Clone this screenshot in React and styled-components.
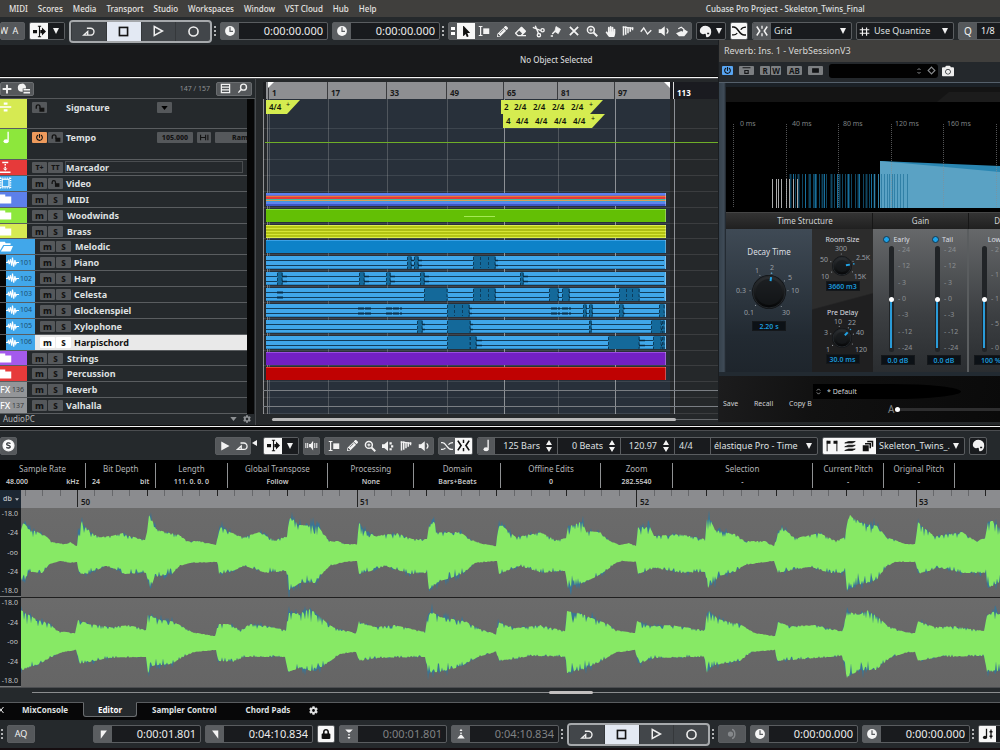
import React, { useState } from "react";
import styled, { createGlobalStyle, css } from "styled-components";
import {
  FaMousePointer,
  FaPencilAlt,
  FaEraser,
  FaHandPaper,
  FaLock,
  FaCog,
  FaCamera,
  FaPowerOff,
} from "react-icons/fa";

const GlobalStyle = createGlobalStyle`
  * {
    box-sizing: border-box;
  }
  body {
    margin: 0;
    background: #0b0b0c;
    color: #dfe0e1;
    font-family: "Noto Sans", "Open Sans", sans-serif;
    font-size: 9px;
    line-height: 12px;
    overflow-x: hidden;
  }
  button, input, select {
    font: inherit;
    color: inherit;
    margin: 0;
    padding: 0;
    border: 0;
    border-radius: 0;
    background: none;
    outline: none;
  }
`;

/* ---------- icons, all drawn on a 16 x 16 grid ---------- */

const Svg = ({ children, size = 12, ...rest }) => (
  <svg
    width={size}
    height={size}
    viewBox="0 0 16 16"
    fill="none"
    stroke="currentColor"
    strokeWidth="2"
    aria-hidden="true"
    {...rest}
  >
    {children}
  </svg>
);

const CycleIcon = (p) => (
  <Svg {...p}>
    <path d="M6 4h4.500a4 4 0 0 1 0 8.500H2l5-4.500v4" strokeWidth="1.700" />
  </Svg>
);
const StopIcon = (p) => (
  <Svg {...p}>
    <rect x="3" y="3" width="10" height="10" />
  </Svg>
);
const PlayIcon = (p) => (
  <Svg {...p}>
    <path d="M3 2l11 6-11 6z" />
  </Svg>
);
const RecordIcon = (p) => (
  <Svg {...p}>
    <circle cx="8" cy="8" r="5.600" />
  </Svg>
);
const ClockIcon = (p) => (
  <Svg {...p}>
    <circle cx="8" cy="8" r="6.600" fill="currentColor" stroke="none" />
    <path d="M8 3v5.400h4" stroke="#5b5e61" strokeWidth="1.600" />
  </Svg>
);
const ScrollIcon = (p) => (
  <Svg {...p}>
    <path d="M8 1v14M6 1.500h4M6 14.500h4" strokeWidth="1.400" />
    <path d="M0 6h5v4H0zM9 6h2V3l5 5-5 5v-3H9z" fill="currentColor" stroke="none" />
  </Svg>
);
const RangeIcon = (p) => (
  <Svg {...p}>
    <path d="M1 2h5M1 14h5M3.500 2v12" strokeWidth="1.600" />
    <rect x="7" y="4.500" width="8" height="7.500" fill="currentColor" stroke="none" />
  </Svg>
);
const ScissorsIcon = (p) => (
  <Svg {...p} strokeWidth="1.700">
    <circle cx="13" cy="6.500" r="2" />
    <circle cx="8.500" cy="12.500" r="2" />
    <path d="M11 7L1 3M8 10.500L4 1" />
  </Svg>
);
const GlueIcon = (p) => (
  <Svg {...p}>
    <path d="M8 2l6 3.500-3 6-4.500-2.800z" fill="currentColor" stroke="currentColor" strokeWidth="1" />
    <path d="M7 8l-4 4M1 14.500h3" strokeWidth="2" />
  </Svg>
);
const CrossIcon = (p) => (
  <Svg {...p}>
    <path d="M2.500 2.500l11 11M13.500 2.500l-11 11" strokeWidth="2.400" />
  </Svg>
);
const ZoomIcon = (p) => (
  <Svg {...p}>
    <circle cx="6.500" cy="6.500" r="4.600" />
    <path d="M10 10l5 5" strokeWidth="2.600" />
    <path d="M6.500 4.500v4M4.500 6.500h4" strokeWidth="1.400" />
  </Svg>
);
const WarpIcon = (p) => (
  <Svg {...p}>
    <path d="M2 2v12M5 2v11M8 3v8M11 3v6M14 3v4" strokeWidth="2" />
    <path d="M1 2.500l14 2" strokeWidth="1.500" />
  </Svg>
);
const LineIcon = (p) => (
  <Svg {...p}>
    <path d="M1 9l4-5 5 8 5-5" strokeWidth="1.800" />
  </Svg>
);
const SpeakerIcon = (p) => (
  <Svg {...p}>
    <path d="M1 5.500h3l5-4v13l-5-4H1z" fill="currentColor" stroke="none" />
    <path d="M11.500 4.500c2 2 2 5 0 7" strokeWidth="1.700" />
  </Svg>
);
const MonitorIcon = (p) => (
  <Svg {...p}>
    <path d="M5 6h2l3-4v12l-3-4H5z" fill="currentColor" stroke="none" />
    <path d="M1 5v6M3.300 5v6M12 5v6M14.500 5v6" strokeWidth="1.300" />
  </Svg>
);
const ScrubIcon = (p) => (
  <Svg {...p}>
    <path d="M0 5.500h3l5-4v13l-5-4H0z" fill="currentColor" stroke="none" />
    <path d="M10 3h3v3h-3zM12 7h3v3h-3zM10 11h3v2.500h-3z" fill="currentColor" stroke="none" />
  </Svg>
);
const PaintIcon = (p) => (
  <Svg {...p}>
    <path d="M0 11l7-3 2 1 1-4 6 4-5 6H4z" fill="currentColor" stroke="none" />
    <path d="M3 5l4-2 4 3" strokeWidth="1.500" />
  </Svg>
);
const HeadIcon = (p) => (
  <Svg {...p}>
    <path
      d="M8 1a7 6.500 0 0 1 7 7c0 4-2 7-5 7-2 0-1-3-2-4s-2 1-4 0-3-2-3-4a7 6 0 0 1 7-6z"
      fill="currentColor"
      stroke="none"
    />
    <path d="M10 10.500h2.500" stroke="#1c1e21" strokeWidth="1.800" />
  </Svg>
);
const FadeIcon = (p) => (
  <Svg {...p}>
    <path d="M0 3.500h2c5 0 6 9 12 9h2" strokeWidth="1.700" />
    <path d="M0 12.500h2c2 0 3-1 4-2M10 6.500c1-2 3-3 6-3" strokeWidth="1.400" />
  </Svg>
);
const SnapIcon = (p) => (
  <Svg {...p}>
    <path d="M8 1v4M8 11v4" strokeWidth="1.800" />
    <path d="M1 2l4 6-4 6M15 2l-4 6 4 6" strokeWidth="2" />
  </Svg>
);
const HashIcon = (p) => (
  <Svg {...p}>
    <path d="M5 2v12M11 2v12M1 5.500h14M1 10.500h14" strokeWidth="1.700" />
  </Svg>
);
const NoteIcon = (p) => (
  <Svg {...p}>
    <path d="M10 1v11" strokeWidth="1.700" />
    <ellipse cx="7.500" cy="12.500" rx="3.200" ry="2.500" fill="currentColor" stroke="none" />
  </Svg>
);
const FolderIcon = (p) => (
  <Svg {...p}>
    <path d="M0 2h7v2.500h8V14H0z" fill="currentColor" stroke="none" />
  </Svg>
);
const OpenFolderIcon = (p) => (
  <Svg {...p}>
    <path d="M0 2h6l1 2h6v2H4L0 13z" fill="currentColor" stroke="none" />
    <path d="M5 7.500h11L13 14H1z" fill="currentColor" stroke="none" />
  </Svg>
);
const WaveIcon = (p) => (
  <Svg {...p}>
    <path d="M0 8h2l1-2 1 4 1.500-6L7 12 8 2l1.500 11L11 5l1 5 1-2h3" strokeWidth="1.400" />
  </Svg>
);
const UnlockIcon = (p) => (
  <Svg {...p}>
    <path d="M2 9V6a3 3 0 0 1 6 0v3" strokeWidth="2.200" />
    <rect x="7" y="7.500" width="8" height="6.500" fill="currentColor" stroke="none" />
  </Svg>
);
const ListIcon = (p) => (
  <Svg {...p}>
    <path d="M2 2h12v12H2zM2 6h12M2 10h12" strokeWidth="1.800" />
  </Svg>
);
const SearchIcon = (p) => (
  <Svg {...p}>
    <circle cx="9.500" cy="6" r="4.300" />
    <path d="M6 9.500L2 14" />
  </Svg>
);
const LayersIcon = (p) => (
  <Svg {...p}>
    <path d="M1 4l5-2h9l-4 2zM1 9l5-2h9l-4 2zM1 14l5-2h9l-4 2z" fill="currentColor" strokeWidth="1" />
  </Svg>
);
const StackIcon = (p) => (
  <Svg {...p}>
    <path d="M7 1h8v8h-2V3H7zM4 4h8v7h-2V6H4z" fill="currentColor" stroke="none" />
    <path d="M1 7h8v8H1z" fill="currentColor" stroke="none" />
  </Svg>
);
const MarksIcon = (p) => (
  <Svg {...p}>
    <path d="M1.500 15V1M14.500 15V1" strokeWidth="1.300" />
    <path d="M1 1h5v4H1zM10 1h5v4h-5z" fill="currentColor" stroke="none" />
  </Svg>
);
const LeftMark = (p) => (
  <Svg {...p}>
    <path d="M4 14V2h9z" fill="currentColor" stroke="none" />
  </Svg>
);
const RightMark = (p) => (
  <Svg {...p}>
    <path d="M12 14V2H3z" fill="currentColor" stroke="none" />
  </Svg>
);
const PunchIn = (p) => (
  <Svg {...p}>
    <path d="M3 2h10l-4 4H7zM7 8h2v2H7zM8 15l-2-3h4z" fill="currentColor" stroke="none" />
  </Svg>
);
const PunchOut = (p) => (
  <Svg {...p}>
    <path d="M3 14h10L9 9H7zM7 6h2v2H7zM8 1l2 3H6z" fill="currentColor" stroke="none" />
  </Svg>
);
const DivideIcon = (p) => (
  <Svg {...p}>
    <path d="M0 8h15" />
    <path d="M5 2h5v3H5zM5 11h5v3H5z" fill="currentColor" stroke="none" />
  </Svg>
);
const MarkerIcon = (p) => (
  <Svg {...p}>
    <path d="M0 15h14M3 2h8" />
    <path d="M7 4v6" strokeDasharray="2 1.500" />
    <path d="M4 10h6l-3 3z" fill="currentColor" stroke="none" />
  </Svg>
);
const FilmIcon = (p) => (
  <Svg {...p}>
    <rect x="3" y="3" width="9" height="10" strokeWidth="1.500" />
    <path d="M1 1v14M14 1v14" strokeDasharray="1.500 1.500" />
    <path d="M0 1.500h15M0 14.500h15" strokeWidth="1.500" strokeDasharray="1.500 1.500" />
  </Svg>
);

/* ---------- shared pieces ---------- */

const Page = styled.div`
  position: relative;
  display: flex;
  flex-direction: column;
  overflow: hidden;
`;

const MenuBar = styled.nav`
  display: flex;
  align-items: center;
  height: 17px;
  padding-left: 9px;
  gap: 10px;
  background: #403f3d;
  font-size: 8px;
  font-weight: 500;
  a {
    color: #e6e4e2;
    text-decoration: none;
  }
`;

const WindowTitle = styled.h1`
  flex: 1;
  margin: 0 0 0 184px;
  text-align: center;
  font-size: 8px;
  font-weight: 500;
`;

const Toolbar = styled.div`
  display: flex;
  align-items: center;
  height: ${(p) => p.$height || 28}px;
  padding-left: ${(p) => p.$indent || 0}px;
  gap: 4px;
  background: #25292c;
  white-space: nowrap;
  > * {
    flex-shrink: 0;
  }
`;

const Group = styled.div`
  display: flex;
  align-items: stretch;
  height: 18px;
  overflow: hidden;
  border: 1px solid #5a5d60;
  border-radius: 2px;
  background: ${(p) => (p.$dark ? "#191b1e" : "#55585b")};
`;

const Tool = styled.button`
  display: flex;
  align-items: center;
  justify-content: center;
  width: ${(p) => p.$w || 18}px;
  color: #f2f2f2;
  font-size: ${(p) => p.$size || 11}px;
  ${(p) =>
    p.$grey &&
    css`
      background: #55585b;
    `}
  ${(p) =>
    p.$on &&
    css`
      background: #f7f7f7;
      color: #111;
    `}
  ${(p) =>
    p.$dark &&
    css`
      background: #191b1e;
    `}
`;

const Dots = styled.span`
  width: 4px;
  height: 11px;
  margin: 0 -2px;
  background: repeating-linear-gradient(#b0b2b4 0 2px, transparent 2px 4px);
  background-clip: content-box;
  padding-right: 2px;
`;

const TransportBox = styled.div`
  display: flex;
  width: 143px;
  height: 23px;
  overflow: hidden;
  border: 2px solid #a6a9ac;
  border-radius: 4px;
  background: #42464a;
`;

const TransportButton = styled.button`
  flex: 1;
  display: flex;
  align-items: center;
  justify-content: center;
  color: #eee;
  border-left: 1px solid #35383b;
  ${(p) =>
    p.$on &&
    css`
      background: #e3e9f3;
      color: #151515;
    `}
`;

const TimeBox = styled.label`
  display: flex;
  width: 108px;
  height: 18px;
  border: 1px solid #5a5d60;
  border-radius: 2px;
  background: #191b1e;
  span {
    display: flex;
    align-items: center;
    justify-content: center;
    width: 18px;
    background: #5b5e61;
    color: #f5f5f5;
  }
  input {
    flex: 1;
    min-width: 0;
    padding-right: 4px;
    text-align: right;
    font-size: 11px;
    color: ${(p) => (p.$dim ? "#808284" : "#ececec")};
  }
`;

const Picker = styled.div`
  position: relative;
  display: flex;
  width: ${(p) => p.$w}px;
  border-left: ${(p) => (p.$line ? "1px solid #5a5d60" : "0")};
  select {
    width: 100%;
    appearance: none;
    padding: 0 12px 0 3px;
  }
  &::after {
    content: "";
    position: absolute;
    right: 5px;
    top: 5px;
    border: 3px solid transparent;
    border-top: 6px solid #f2f2f2;
    border-bottom: 0;
    pointer-events: none;
  }
`;

const Caret = styled.i`
  border: 3px solid transparent;
  border-top: 6px solid #f2f2f2;
  border-bottom: 0;
`;

const Stepper = styled.label`
  display: flex;
  align-items: center;
  width: ${(p) => p.$w}px;
  border-left: 1px solid #5a5d60;
  input {
    flex: 1;
    min-width: 0;
    text-align: ${(p) => (p.$plain ? "left" : "right")};
    padding: 0 6px 0 4px;
  }
  svg {
    margin-right: 5px;
  }
`;

const Arrows = () => (
  <svg width="6" height="12" viewBox="0 0 6 12" fill="#f2f2f2" aria-hidden="true">
    <path d="M3 0l3 5H0zM3 12l3-5H0z" />
  </svg>
);

const Select = ({ label, value, ...rest }) => (
  <Picker {...rest}>
    <select aria-label={label} defaultValue={value}>
      <option>{value}</option>
    </select>
  </Picker>
);

const Time = ({ icon, label, value, dim }) => (
  <TimeBox $dim={dim}>
    <span>{icon}</span>
    <input aria-label={label} defaultValue={value} />
  </TimeBox>
);

function Transport() {
  const [mode, setMode] = useState("Stop");
  const buttons = [
    ["Cycle", <CycleIcon size={13} />],
    ["Stop", <StopIcon size={13} />],
    ["Play", <PlayIcon size={12} />],
    ["Record", <RecordIcon size={13} />],
  ];
  return (
    <TransportBox>
      {buttons.map(([name, icon]) => (
        <TransportButton key={name} aria-label={name} $on={mode === name} onClick={() => setMode(name)}>
          {icon}
        </TransportButton>
      ))}
    </TransportBox>
  );
}

/* ---------- top of the project window ---------- */

const menus = ["MIDI", "Scores", "Media", "Transport", "Studio", "Workspaces", "Window", "VST Cloud", "Hub", "Help"];

const InfoStrip = styled.div`
  height: 31px;
  padding: 9px 0 0 520px;
  background: #18191b;
  font-size: 8px;
  font-weight: 500;
  color: #d2d3d4;
`;

const Divider = styled.div`
  height: ${(p) => (p.$thick ? 6 : 3)}px;
  border-top: 1px solid #0a0a0a;
  border-bottom: 1px solid #4b4d50;
  background: linear-gradient(#f4f4f4 0 1px, #080808 1px);
`;

const projectTools = [
  ["Range", <RangeIcon />],
  ["Draw", <FaPencilAlt />],
  ["Erase", <FaEraser />],
  ["Split", <ScissorsIcon size={13} />],
  ["Glue", <GlueIcon />],
  ["Mute", <CrossIcon />],
  ["Zoom", <ZoomIcon />],
  ["Comp", <FaHandPaper />],
  ["Time Warp", <WarpIcon />],
  ["Line", <LineIcon />],
  ["Play", <SpeakerIcon />],
  ["Color", <PaintIcon />],
];

const LeftText = styled.span`
  flex: 1;
  padding-left: 4px;
  text-align: left;
`;

const ProjectToolbar = () => (
  <Toolbar>
    <Group>
      <Tool $w={6} $size={9}>W</Tool>
      <Tool $w={17} $size={9}>A</Tool>
    </Group>
    <Group $dark>
      <Tool $on aria-label="Auto-Scroll"><ScrollIcon size={13} /></Tool>
      <Tool $w={16} $dark aria-label="Auto-Scroll settings"><Caret /></Tool>
    </Group>
    <Transport />
    <Dots />
    <Time icon={<ClockIcon />} label="Primary time" value="0:00:00.000" />
    <Time icon={<ClockIcon />} label="Secondary time" value="0:00:00.000" />
    <Dots />
    <Group>
      <Tool $w={8} aria-label="Tool menu">
        <svg width="4" height="8" viewBox="0 0 4 8" fill="#fff"><path d="M0 0h4v3H0zM0 5h4v3H0z" /></svg>
      </Tool>
      <Tool $on aria-label="Object Selection"><FaMousePointer /></Tool>
      {projectTools.map(([name, icon]) => (
        <Tool key={name} aria-label={name}>{icon}</Tool>
      ))}
    </Group>
    <Group $dark>
      <Tool $w={16} aria-label="Colors"><HeadIcon size={13} /></Tool>
      <Tool $w={12} aria-label="Color list"><Caret /></Tool>
    </Group>
    <Group>
      <Tool $w={16} $on aria-label="Snap"><FadeIcon size={14} /></Tool>
    </Group>
    <Group $dark>
      <Tool $w={17} $grey aria-label="Snap type"><SnapIcon /></Tool>
      <Select $w={81} $line label="Grid type" value="Grid" />
    </Group>
    <Group $dark>
      <Tool $w={14} aria-label="Quantize grid"><HashIcon size={11} /></Tool>
      <Select $w={82} label="Grid resolution" value="Use Quantize" />
    </Group>
    <Group>
      <Tool $w={18} $size={10} aria-label="Quantize">Q</Tool>
      <Tool $w={60} $dark $size={9}>
        <LeftText>1/8</LeftText>
      </Tool>
    </Group>
  </Toolbar>
);

/* ---------- track list ---------- */

const Workspace = styled.main`
  display: flex;
  height: 346px;
  background: #25292c;
`;

const TrackPanel = styled.section`
  display: flex;
  flex-direction: column;
  width: 256px;
  border-right: 1px solid #45484b;
`;

const TrackHeader = styled.header`
  display: flex;
  align-items: center;
  height: 20px;
  padding: 0 3px 0 0;
  border-bottom: 1px solid #55585b;
  color: #8e9194;
  font-size: 7px;
  p {
    flex: 1;
    margin: 0;
    padding-right: 6px;
    text-align: right;
  }
`;

const HeaderButtons = styled.div`
  display: flex;
  height: 14px;
  border: 1px solid #6a6d70;
  border-radius: 2px;
  background: #55585b;
`;

const TrackList = styled.ul`
  display: grid;
  grid-template-rows: 30px 31px 254px;
  margin: 0 8px 0 0;
  padding: 0;
  list-style: none;
  box-shadow: 7px 0 0 #060606;
`;

const EvenRows = styled.ul`
  display: grid;
  grid-template-rows: repeat(16, 1fr);
  height: 100%;
  margin: 0;
  padding: 0;
  list-style: none;
`;

const Track = styled.li`
  display: flex;
  align-items: flex-start;
  min-height: 0;
  overflow: hidden;
  border-bottom: 1px solid #5a5d60;
  padding-left: ${(p) => (p.$child ? 6 : 0)}px;
  background: ${(p) => (p.$child ? "linear-gradient(90deg, #060606 6px, #25292c 6px)" : "#25292c")};
  ${(p) =>
    p.$selected &&
    css`
      background: linear-gradient(90deg, #060606 6px, #e9e9e9 6px);
      color: #111;
    `}
`;

const TrackColor = styled.div`
  display: flex;
  align-items: ${(p) => (p.$tall ? "flex-start" : "center")};
  align-self: stretch;
  flex-shrink: 0;
  width: ${(p) => p.$w}px;
  padding-top: ${(p) => (p.$tall ? 2 : 0)}px;
  background: ${(p) => p.$color};
  color: #fff;
  svg {
    flex-shrink: 0;
  }
  small {
    margin-left: 1px;
    font-size: 7px;
    color: ${(p) => (p.$fx ? "#3a3c3e" : "#1d4d6e")};
  }
  b {
    flex-shrink: 0;
    width: 11px;
    font-size: 9px;
    font-weight: 500;
  }
`;

const TrackButtons = styled.div`
  display: flex;
  gap: 1px;
  flex-shrink: 0;
  width: ${(p) => p.$w || 34}px;
  margin: ${(p) => (p.$tall ? 3 : 2)}px 0 0 5px;
`;

const MiniButton = styled.button`
  display: flex;
  align-items: center;
  justify-content: center;
  width: ${(p) => p.$w || 15}px;
  height: 11px;
  overflow: hidden;
  border-radius: 1px;
  background: ${(p) => p.$bg || "#55585b"};
  color: #131313;
  font-size: ${(p) => p.$size || 8}px;
  font-weight: 800;
  line-height: 11px;
`;

const TrackName = styled.span`
  font-size: 9px;
  font-weight: 700;
  line-height: ${(p) => (p.$tall ? 18 : 15)}px;
  width: ${(p) => p.$w || "auto"};
  ${(p) =>
    p.$boxed &&
    css`
      flex: 1;
      height: 12px;
      margin: 1px 4px 0 -1px;
      border: 1px solid #4a4d50;
      line-height: 11px;
    `}
`;

const Extras = styled.div`
  display: flex;
  gap: 4px;
  flex: 1;
  overflow: hidden;
  margin-top: 3px;
  > * {
    flex-shrink: 0;
  }
`;

const PanelFooter = styled.footer`
  display: flex;
  align-items: center;
  gap: 6px;
  height: 10px;
  padding: 0 4px 0 3px;
  color: #8e9194;
  font-size: 8px;
  line-height: 8px;
  span {
    flex: 1;
    color: #b4b6b8;
  }
`;

const tracks = [
  { name: "Marcador", color: "#e63a3a", icon: "marker" },
  { name: "Video", color: "#41a7ea", icon: "film" },
  { name: "MIDI", color: "#5d80ea", icon: "folder", clip: "midi" },
  { name: "Woodwinds", color: "#8de73c", icon: "folder", clip: "wood" },
  { name: "Brass", color: "#d6ea52", icon: "folder", clip: "brass" },
  { name: "Melodic", color: "#41a7ea", icon: "open", clip: "melodic" },
  { name: "Piano", number: 101, blocks: [[141, 4, 3], [148, 4, 4], [207, 22, 3]] },
  { name: "Harp", number: 102, blocks: [[11, 5, 5], [93, 5, 5], [120, 4, 5], [154, 4, 5], [254, 3, 5]] },
  { name: "Celesta", number: 103, blocks: [[158, 23, 0], [207, 22, 1], [283, 9, 1], [296, 7, 1], [353, 20, 0]], thin: [[11, 6]] },
  { name: "Glockenspiel", number: 104, blocks: [[181, 22, 3], [317, 3, 1], [323, 3, 1], [353, 4, 2], [393, 5, 0]], thin: [[92, 14], [120, 16], [285, 9], [296, 9]] },
  { name: "Xylophone", number: 105, blocks: [[151, 5, 3], [181, 23, 3], [323, 2, 1], [385, 10, 1], [396, 2, 0]] },
  { name: "Harpischord", number: 106, selected: true, blocks: [[181, 23, 0], [204, 6, 6], [342, 31, 6], [387, 8, 1], [396, 2, 0]] },
  { name: "Strings", color: "#a45aec", icon: "folder", clip: "strings" },
  { name: "Percussion", color: "#e63a3a", icon: "folder", clip: "percussion" },
  { name: "Reverb", color: "#939598", fx: 136 },
  { name: "Valhalla", color: "#939598", fx: 137 },
];

const trackIcons = {
  marker: <MarkerIcon size={12} />,
  film: <FilmIcon size={12} />,
  folder: <FolderIcon size={12} />,
  open: <OpenFolderIcon size={13} />,
};

function TrackRow({ track }) {
  const child = !!track.number;
  const deep = child || track.icon === "open";
  const marker = track.icon === "marker";
  const bg = track.selected ? "#fff" : undefined;
  return (
    <Track $child={child} $selected={track.selected}>
      <TrackColor $color={track.color || "#41a7ea"} $fx={track.fx} $w={child ? 29 : deep ? 35 : 27}>
        {track.icon && trackIcons[track.icon]}
        {child && <WaveIcon size={13} />}
        {track.fx && <b>FX</b>}
        {(track.number || track.fx) && <small>{track.number || track.fx}</small>}
      </TrackColor>
      <TrackButtons $w={track.clip ? 35 : 34}>
        <MiniButton $bg={bg} $size={marker ? 7 : 9} aria-label="Mute">
          {marker ? "T+" : "m"}
        </MiniButton>
        <MiniButton $bg={bg} $size={marker ? 7 : 8} aria-label="Solo">
          {marker ? "TT" : track.icon === "film" ? <UnlockIcon size={9} /> : "S"}
        </MiniButton>
      </TrackButtons>
      <TrackName $boxed={marker}>{track.name}</TrackName>
    </Track>
  );
}

const Tracks = () => (
  <TrackPanel>
    <TrackHeader>
      <HeaderButtons>
        <Tool $w={12} aria-label="Add track">
          <Svg size={10}><path d="M8 1v14M1 8h14" strokeWidth="3" /></Svg>
        </Tool>
        <Tool $w={20} aria-label="Track presets">
          <Svg size={13}>
            <path d="M6 2a5 5 0 1 0 0 10h1V8h4a5 5 0 0 0-5-6z" fill="currentColor" stroke="none" />
            <path d="M8 9.500h8M8 13h8" strokeWidth="2" />
          </Svg>
        </Tool>
      </HeaderButtons>
      <p>147 / 157</p>
      <HeaderButtons>
        <Tool $w={17} aria-label="Divide list"><ListIcon size={11} /></Tool>
        <Tool $w={17} aria-label="Find tracks"><SearchIcon size={11} /></Tool>
      </HeaderButtons>
    </TrackHeader>
    <TrackList>
      <Track>
        <TrackColor $tall $w={27} $color="#d6ea52"><DivideIcon size={12} /></TrackColor>
        <TrackButtons $tall><MiniButton aria-label="Lock"><UnlockIcon size={10} /></MiniButton></TrackButtons>
        <TrackName $tall $w="91px">Signature</TrackName>
        <Extras>
          <MiniButton aria-label="Signature options">
            <svg width="7" height="4" viewBox="0 0 8 5"><path d="M0 0h8L4 5z" /></svg>
          </MiniButton>
        </Extras>
      </Track>
      <Track>
        <TrackColor $tall $w={27} $color="#8de73c"><NoteIcon size={13} /></TrackColor>
        <TrackButtons $tall>
          <MiniButton $bg="#ee9a5c" aria-label="Activate tempo"><FaPowerOff size={7} /></MiniButton>
          <MiniButton aria-label="Lock"><UnlockIcon size={10} /></MiniButton>
        </TrackButtons>
        <TrackName $tall $w="91px">Tempo</TrackName>
        <Extras>
          <MiniButton $w={36} $size={7}>105.000</MiniButton>
          <MiniButton $w={14} aria-label="Time base">
            <Svg size={9}><path d="M1 3v10M1 8h9M10 3v10M14 3v10" /></Svg>
          </MiniButton>
          <MiniButton $w={50} $size={7}>Ram</MiniButton>
        </Extras>
      </Track>
      <li>
        <EvenRows>
          {tracks.map((t) => (
            <TrackRow key={t.name} track={t} />
          ))}
        </EvenRows>
      </li>
    </TrackList>
    <PanelFooter>
      <span>AudioPC</span>
      <svg width="7" height="4" viewBox="0 0 8 5" fill="currentColor"><path d="M0 0h8L4 5z" /></svg>
      <FaCog size={8} />
    </PanelFooter>
  </TrackPanel>
);

/* ---------- arrangement ---------- */

const Timeline = styled.section`
  position: relative;
  flex: 1;
  min-width: 0;
  padding: 3px 0 0 7px;
  background: #25282a;
`;

const Bars = styled.div`
  position: relative;
  display: flex;
  height: 17px;
  padding-left: 5px;
  background: linear-gradient(90deg, #1d1e21 3px, #8e8f92 3px 407px, #1a1b20 407px);
  &::before,
  &::after {
    content: "";
    position: absolute;
    top: 0;
    left: 5px;
    border-top: 6px solid #fff;
    border-right: 6px solid transparent;
  }
  &::after {
    left: 401px;
    border-right: 0;
    border-left: 6px solid transparent;
  }
`;

const Bar = styled.span`
  flex: 0 0 ${(p) => p.$w}px;
  padding: 5px 0 0 3px;
  border-left: 1px solid ${(p) => (p.$past ? "#ddd" : "#3a3b3e")};
  color: ${(p) => (p.$past ? "#fff" : "#1a1a1a")};
  font-size: 8px;
  font-weight: 700;
`;

const Lanes = styled.div`
  position: relative;
  display: grid;
  grid-template-rows: 30px 31px 254px;
  background: linear-gradient(90deg, #26292c 3px, #28303a 3px 407px, #25282a 407px);
`;

const GridLines = styled.div`
  position: absolute;
  inset: 0;
  display: flex;
  padding-left: 5px;
  border-left: 1px solid #8f9092;
  box-shadow: inset 3px 0 0 #26292c, inset 4px 0 0 #77797b;
`;

const GridLine = styled.i`
  flex: 0 0 ${(p) => p.$w}px;
  border-left: 1px solid ${(p) => (p.$bright ? "#8c9095" : "#50565d")};
`;

const Lane = styled.div`
  position: relative;
  min-height: 0;
  padding: 1px 0 2px 3px;
  border-bottom: 1px solid rgba(255, 255, 255, 0.1);
`;

const FxLine = styled.div`
  height: 1px;
  margin: 7px 0 0 -3px;
  background: #7a7e83;
`;

const flatClips = {
  midi: "linear-gradient(#5b80f0 0 2px, #7d6ab0 2px 3px, #ef7433 3px 4px, #e63a3c 4px 6px, #42b6a0 6px 7px, #d8a055 7px 8px, #3f9bdc 8px 9px, #5f83ee 9px 11px, #3b56c4 11px)",
  wood: "linear-gradient(#a5ea55, #a5ea55) 198px 7px / 31px 1px no-repeat, linear-gradient(#86e033 0 1px, #63bf05 1px)",
  brass: "linear-gradient(#dcf04a 0 1px, #b3c414 1px 3px, #d6e636 3px 4px, #aebf16 4px 6px, #d6e636 6px 7px, #b3c414 7px 9px, #d6e636 9px 10px, #b3c414 10px 12px, #dcf04a 12px)",
  melodic: "linear-gradient(#3aa1e6 0 1px, #0d82c8 1px)",
  strings: "linear-gradient(#9a4ce2 0 1px, #7220c4 1px)",
  percussion: "linear-gradient(#ee3a30 0 1px, #bf0202 1px)",
};

const Clip = styled.div`
  width: 400px;
  height: 13px;
  background: ${(p) => flatClips[p.$kind] || "#40a7ea"};
  border-right: 1px solid rgba(255, 255, 255, 0.3);
  svg {
    display: block;
  }
`;

const Signatures = styled.div`
  position: absolute;
  left: ${(p) => p.$x}px;
  top: ${(p) => p.$y}px;
  display: flex;
  width: ${(p) => p.$w}px;
  height: 14px;
  padding-left: 2px;
  background: #d5ec50;
  clip-path: polygon(0 0, 100% 0, calc(100% - 13px) 100%, 0 100%);
  color: #10150a;
  font-size: 8px;
  font-weight: 600;
  line-height: 14px;
  span {
    width: 19px;
    padding-left: 1px;
  }
  span:first-child {
    width: ${(p) => p.$first || 18}px;
  }
  sup {
    font-size: 7px;
    font-weight: 400;
    line-height: 10px;
  }
`;

const TempoLine = styled.div`
  position: absolute;
  left: 2px;
  right: 0;
  top: 13px;
  height: 1px;
  background: #6fae28;
`;

const ScrollTrack = styled.div`
  height: 3px;
  margin: 4px 0 0 9px;
  background: linear-gradient(#25282a 1px, #66696c 1px 2px, #25282a 2px);
  div {
    width: 404px;
    height: 3px;
    border-radius: 2px;
    background: #b9b9b9;
  }
`;

const bars = [[1, 59], [17, 59], [33, 60], [49, 57], [65, 54], [81, 57], [97, 59], [113, 45]];

function AudioClip({ blocks = [], thin = [] }) {
  return (
    <Clip>
      <svg width="399" height="13" viewBox="0 0 399 13">
        <path d="M0 12.500H399" stroke="#2b86c2" />
        <path d="M0 4.500H398M0 9.500H398" stroke="#123e5c" />
        {thin.map(([x, w]) => (
          <g key={x} stroke="#0a2e47" strokeWidth="2" strokeDasharray="6 1">
            <path d={`M${x} 4.500h${w}M${x} 9.500h${w}`} />
          </g>
        ))}
        {blocks.map(([x, w, tail]) => (
          <g key={x}>
            <path
              d={`M${x} 1l1-1h${w - 1}l1 1v4l-1 1.500 1 1.500v4l-1 1h-${w - 1}l-1-1V8l1-1.500-1-1.500z`}
              fill="#14699a"
            />
            <path
              d={`M${x + 0.5} 1v12M${x + w} 1v12${w > 15 && w < 23 ? `M${x + Math.round(w / 3) + 0.5} 1v11M${x + Math.round((w * 2) / 3) + 0.5} 1v11` : ""}`}
              stroke="#0c3c5c"
              strokeDasharray="3 2"
            />
            {tail > 0 && (
              <path d={`M${x + w} 4.500h${tail}M${x + w} 9.500h${tail}`} stroke="#0a2a40" strokeWidth="1.500" />
            )}
          </g>
        ))}
      </svg>
    </Clip>
  );
}

const Arrangement = () => (
  <Timeline>
    <Bars>
      {bars.map(([n, w]) => (
        <Bar key={n} $w={w} $past={n === 113}>{n}</Bar>
      ))}
    </Bars>
    <Lanes>
      <GridLines>
        {bars.map(([n, w]) => (
          <GridLine key={n} $w={w} $bright={n === 65 || n > 96} />
        ))}
      </GridLines>
      <Lane>
        <Signatures $x={3} $y={1} $w={34}><span>4/4</span><sup>+</sup></Signatures>
        <Signatures $x={238} $y={1} $w={102} $first={10}>
          <span>2</span><span>2/4</span><span>2/4</span><span>2/4</span><span>2/4</span><sup>+</sup>
        </Signatures>
        <Signatures $x={240} $y={15} $w={102} $first={10}>
          <span>4</span><span>4/4</span><span>4/4</span><span>4/4</span><span>4/4</span><sup>+</sup>
        </Signatures>
      </Lane>
      <Lane><TempoLine /></Lane>
      <EvenRows as="div">
        {tracks.map((t) => (
          <Lane key={t.name}>
            {t.clip && <Clip $kind={t.clip} />}
            {t.blocks && <AudioClip blocks={t.blocks} thin={t.thin} />}
            {t.fx && <FxLine />}
          </Lane>
        ))}
      </EvenRows>
    </Lanes>
    <ScrollTrack><div /></ScrollTrack>
  </Timeline>
);

/* ---------- reverb plug-in window ---------- */

const Plugin = styled.section`
  position: absolute;
  left: 718px;
  right: 0;
  top: 40px;
  height: 382px;
  overflow: hidden;
  border-left: 1px solid #1a1d20;
  background: #0d0d0e;
  color: #cfd2d4;
  font-size: 7px;
`;

const PluginTitle = styled.h2`
  height: 22px;
  margin: 0;
  padding: 0 5px;
  background: #403f3d;
  font-size: 9px;
  font-weight: 400;
  line-height: 22px;
  color: #d8d7d5;
`;

const PluginBar = styled.div`
  display: flex;
  align-items: center;
  gap: 6px;
  height: 20px;
  padding: 0 0 3px 3px;
  background: #24282c;
`;

const ButtonPair = styled.div`
  display: flex;
  gap: 1px;
`;

const PlugButton = styled.button`
  display: flex;
  align-items: center;
  justify-content: center;
  width: ${(p) => p.$w || 15}px;
  height: 9px;
  border-radius: 1px;
  background: ${(p) => p.$bg || "#7c7f82"};
  color: #131517;
  font-size: 8px;
  font-weight: 700;
  line-height: 9px;
`;

const PresetField = styled.button`
  display: flex;
  align-items: center;
  justify-content: flex-end;
  gap: 4px;
  width: 109px;
  height: 14px;
  margin-right: -2px;
  padding-right: 2px;
  border-radius: 3px;
  background: #020202;
  color: #8a8d90;
`;

const Frame = styled.div`
  padding: 4px 0 0 7px;
  border-bottom: 4px solid #222a31;
  background: linear-gradient(90deg, #35414c 0, #3f4b57 5px, #1b2127 7px);
  border-top: 1px solid #55606b;
`;

const Display = styled.svg`
  display: block;
  width: 100%;
  height: 125px;
  background: #000;
`;

const Sections = styled.div`
  display: grid;
  grid-template-columns: 147px 96px 1fr;
  height: 17px;
  background: linear-gradient(#333, #202020);
  border-top: 1px solid #454545;
  font-size: 8px;
  line-height: 16px;
  text-align: center;
  span {
    border-right: 1px solid #161616;
  }
  span:first-child {
    padding-left: 12px;
  }
  span:last-child {
    border: 0;
    text-align: right;
  }
`;

const Controls = styled.div`
  display: grid;
  grid-template-columns: 86px 61px 1fr;
  height: 143px;
`;

const DecayPanel = styled.div`
  display: flex;
  flex-direction: column;
  align-items: center;
  padding-top: 17px;
  background: linear-gradient(#3f4a55, #222a32 75%, #1e252c);
`;

const RoomPanel = styled.div`
  display: flex;
  flex-direction: column;
  align-items: center;
  padding-top: 5px;
  background: linear-gradient(165deg, #2c2c2c 50%, #1f1f20 51%);
`;

const GainPanel = styled.div`
  display: flex;
  padding-left: 2px;
  overflow: hidden;
  background: linear-gradient(#66686a, #3c3f42 60%, #2a2d30);
`;

const DialLabel = styled.span`
  color: #dcdfe1;
  font-size: ${(p) => p.$size || 7}px;
  font-weight: 400;
  line-height: 11px;
`;

const Value = styled.output`
  width: 34px;
  height: 10px;
  margin-bottom: ${(p) => p.$gap || 0}px;
  border: 1px solid #15181b;
  background: #0c1116;
  color: #1b98d8;
  font-size: 7px;
  font-weight: 600;
  line-height: 9px;
  text-align: center;
  white-space: nowrap;
`;

const DialBox = styled.label`
  position: relative;
  display: block;
  svg {
    display: block;
  }
  input {
    position: absolute;
    inset: 0;
    width: 100%;
    height: 100%;
    opacity: 0;
  }
`;

function Dial({ width, height, cx, cy, r, angle, marks, label }) {
  const a = (angle * Math.PI) / 180;
  const dx = Math.sin(a);
  const dy = -Math.cos(a);
  return (
    <DialBox>
      <svg width={width} height={height}>
        <defs>
          <linearGradient id={`knob${r}`} x1="0" y1="0" x2="0" y2="1">
            <stop offset="0" stopColor="#2d3033" />
            <stop offset="1" stopColor="#050607" />
          </linearGradient>
        </defs>
        <circle cx={cx} cy={cy} r={r + 1} fill="#101214" />
        <circle cx={cx} cy={cy} r={r} fill={`url(#knob${r})`} stroke="#23272b" />
        <circle cx={cx} cy={cy} r={r - 3} fill="#17191c" opacity="0.700" />
        <path
          d={`M${cx + dx * (r - 5)} ${cy + dy * (r - 5)}L${cx + dx * (r - 1)} ${cy + dy * (r - 1)}`}
          stroke="#22a4e6"
          strokeWidth="2"
        />
        <circle cx={cx + dx * (r + 3)} cy={cy + dy * (r + 3)} r="0.800" fill="#22a4e6" />
        {marks.map(([text, x, y]) => {
          const d = Math.hypot(x - cx, y - cy);
          return (
            <g key={text}>
              <circle cx={cx + ((x - cx) / d) * (r + 3)} cy={cy + ((y - cy) / d) * (r + 3)} r="0.600" fill="#8f969c" />
              <text x={x} y={y + 3} fill="#9a9fa4" fontSize="7" textAnchor="middle">{text}</text>
            </g>
          );
        })}
      </svg>
      <input type="range" aria-label={label} />
    </DialBox>
  );
}

const Channel = styled.div`
  flex: 0 0 46px;
  display: flex;
  flex-direction: column;
  align-items: center;
  padding-top: 4px;
  border-left: ${(p) => (p.$line ? "2px solid #5a5d5f" : "0")};
`;

const ChannelName = styled.label`
  display: flex;
  align-items: center;
  gap: 3px;
  height: 13px;
  padding-right: 3px;
  color: #dcdfe1;
  font-size: 7px;
  white-space: nowrap;
  &::before {
    content: "";
    width: 5px;
    height: 5px;
    border-radius: 50%;
    background: ${(p) => (p.$led ? "#1ea2e8" : "transparent")};
    border: 1px solid ${(p) => (p.$led ? "#17384c" : "transparent")};
  }
`;

const FaderRow = styled.div`
  display: flex;
  height: 106px;
  margin: 0 0 3px 9px;
  gap: 4px;
  input {
    appearance: none;
    writing-mode: vertical-lr;
    direction: rtl;
    width: 5px;
    height: 106px;
    border-radius: 3px;
    background: linear-gradient(90deg, transparent 1px, #2a9bd8 1px 3px, transparent 3px) 0 53px / 100% 49px no-repeat,
      #212427;
  }
  input::-webkit-slider-thumb {
    appearance: none;
    width: 5px;
    height: 5px;
    border-radius: 50%;
    background: #fff;
  }
`;

const Scale = styled.div`
  display: flex;
  flex-direction: column;
  justify-content: space-between;
  width: 18px;
  color: #8b8f92;
  font-size: 7px;
  line-height: 8px;
  white-space: nowrap;
`;

const PluginFoot = styled.div`
  display: flex;
  align-items: flex-start;
  height: 46px;
  padding: 8px 0 0 4px;
  background: linear-gradient(100deg, #1c1c1d, #111 35%, #0a0a0a);
  font-size: 7px;
`;

const FootButton = styled.button`
  flex: 0 0 ${(p) => p.$w}px;
  margin-top: 14px;
  text-align: left;
  white-space: nowrap;
`;

const FootRight = styled.div`
  flex: 1;
  min-width: 0;
`;

const ProgramName = styled.button`
  display: flex;
  align-items: center;
  gap: 5px;
  width: 148px;
  height: 15px;
  padding-left: 2px;
  border-radius: 0 74px 74px 0 / 0 8px 8px 0;
  background: #000;
`;

const Morph = styled.label`
  display: flex;
  align-items: center;
  gap: 1px;
  margin: 4px 0 0 75px;
  color: #7d8082;
  font-size: 10px;
  line-height: 12px;
  input {
    appearance: none;
    flex: 1;
    min-width: 0;
    height: 3px;
    background: #2e2e2f;
  }
  input::-webkit-slider-thumb {
    appearance: none;
    width: 5px;
    height: 5px;
    border-radius: 50%;
    background: #fff;
  }
`;

const channels = [
  { name: "Early", led: true, value: "0.0 dB", scale: ["24", "12", "3", "0", "-3", "-12", "-24"] },
  { name: "Tail", led: true, value: "0.0 dB", scale: ["24", "12", "3", "0", "-3", "-12", "-24"] },
  { name: "Low", value: "100 %", line: true, scale: ["2", "1", "1", "5", "0"] },
];

const earlyBars = [0, 3, 5, 8, 12, 15, 19, 20, 23, 25, 26, 29, 32, 34, 36, 41, 44, 47, 49, 52, 55, 58, 61, 65, 68, 69, 73, 76, 79, 81, 84, 88, 91, 94, 97, 99, 102, 104, 107, 110, 113, 117];
const directBars = [772, 776, 778, 781, 786, 789, 793, 797];

const ReverbWindow = () => (
  <Plugin>
    <PluginTitle>Reverb: Ins. 1 - VerbSessionV3</PluginTitle>
    <PluginBar>
      <PlugButton $w={11} $bg="#58a5f2" aria-label="Activate"><FaPowerOff size={7} /></PlugButton>
      <PlugButton aria-label="Bypass"><Svg size={9}><path d="M1 3h14M5 8h6v5H5z" /></Svg></PlugButton>
      <ButtonPair>
        <PlugButton $w={10}>R</PlugButton>
        <PlugButton $w={10}>W</PlugButton>
      </ButtonPair>
      <PlugButton>AB</PlugButton>
      <PlugButton aria-label="Side-chain"><Svg size={9}><path d="M3 5h10v6H3z" fill="currentColor" /></Svg></PlugButton>
      <PresetField aria-label="Preset browser">
        <Svg size={8}><path d="M5 6l3-3 3 3M5 10l3 3 3-3" /></Svg>
        <Svg size={9}><path d="M8 2l6 6-6 6-6-6z" /></Svg>
      </PresetField>
      <FaCamera size={12} color="#eee" />
    </PluginBar>
    <Frame>
      <Display viewBox="0 0 274 125" preserveAspectRatio="none">
        <rect width="274" height="15" fill="#141414" />
        <path d="M211 15l12-10h51v10z" fill="#1c1c1c" />
        {earlyBars.map((x, i) => (
          <path key={x} d={`M${64 + x + 0.5} 87v34`} stroke={i % 4 === 1 ? "#176f9c" : "#0f4560"} strokeWidth={i % 3 ? 1 : 2} />
        ))}
        {directBars.map((x) => (
          <path key={x} d={`M${x - 725.5} 92v29`} stroke="#a9aaab" />
        ))}
        <path d="M154 74l120 5v42H154z" fill="#2a86b2" />
        <path d="M154 74l120 11v36H154z" fill="#5aa2c4" />
        {earlyBars.slice(30).map((x) => (
          <path key={x} d={`M${64 + x + 0.5} 87v34`} stroke="#3180a6" />
        ))}
        <path d="M0 123h274" stroke="#000" strokeWidth="4" />
        {["0 ms", "40 ms", "80 ms", "120 ms", "160 ms", ""].map((t, i) => (
          <g key={t}>
            <path d={`M${Math.round(7 + i * 52.6) + 0.5} 37V121`} stroke="#8a8d8f" strokeDasharray="1 1" opacity="0.600" />
            <text x={Math.round(14 + i * 51.7)} y="39" fill="#7e8183" fontSize="7">{t}</text>
          </g>
        ))}
      </Display>
      <Sections>
        <span>Time Structure</span>
        <span>Gain</span>
        <span>D</span>
      </Sections>
      <Controls>
        <DecayPanel>
          <DialLabel $size={8}>Decay Time</DialLabel>
          <Dial
            label="Decay Time" width={86} height={64} cx={43} cy={35} r={16} angle={8}
            marks={[["0.1", 23, 55], ["0.3", 15, 33], ["1", 31, 13], ["2", 46, 10], ["5", 64, 20], ["10", 69, 33], ["30", 60, 55]]}
          />
          <Value>2.20 s</Value>
        </DecayPanel>
        <RoomPanel>
          <DialLabel>Room Size</DialLabel>
          <Dial
            label="Room Size" width={61} height={36} cx={30} cy={21} r={9} angle={80}
            marks={[["10", 13, 31], ["50", 12, 14], ["300", 29, 3], ["2.5K", 51, 12], ["15K", 48, 31]]}
          />
          <Value $gap={16}>3660 m3</Value>
          <DialLabel>Pre Delay</DialLabel>
          <Dial
            label="Pre Delay" width={61} height={36} cx={30} cy={20} r={9} angle={45}
            marks={[["1", 16, 31], ["3", 14, 14], ["10", 26, 3], ["22", 40, 4], ["40", 48, 14], ["120", 49, 31]]}
          />
          <Value>30.0 ms</Value>
        </RoomPanel>
        <GainPanel>
          {channels.map((c) => (
            <Channel key={c.name} $line={c.line}>
              <ChannelName $led={c.led} htmlFor={c.name}>{c.name}</ChannelName>
              <FaderRow>
                <input id={c.name} type="range" defaultValue="50" />
                <Scale>
                  {c.scale.map((s, i) => (
                    <span key={i}>- {s}</span>
                  ))}
                </Scale>
              </FaderRow>
              <Value>{c.value}</Value>
            </Channel>
          ))}
        </GainPanel>
      </Controls>
    </Frame>
    <PluginFoot>
      <FootButton $w={31}>Save</FootButton>
      <FootButton $w={35}>Recall</FootButton>
      <FootButton $w={24}>Copy B</FootButton>
      <FootRight>
        <ProgramName>
          <Svg size={7}><path d="M4 6l4-4 4 4M4 10l4 4 4-4" strokeWidth="1.500" /></Svg>
          * Default
        </ProgramName>
        <Morph>A<input type="range" aria-label="Morph A to B" defaultValue="0" /></Morph>
      </FootRight>
    </PluginFoot>
  </Plugin>
);

/* ---------- sample editor ---------- */

const editorTools = [
  ["Range", <RangeIcon />],
  ["Draw", <FaPencilAlt />],
  ["Zoom", <ZoomIcon />],
  ["Audition", <ScrubIcon />],
  ["Warp", <WarpIcon />],
  ["Play", <SpeakerIcon />],
];

const LeftTick = styled.i`
  align-self: flex-start;
  margin: 9px 2px 0 -3px;
  border: 3px solid transparent;
  border-right: 5px solid #f2f2f2;
  border-left: 0;
`;

const Spacer = styled.span`
  width: ${(p) => p.$w}px;
`;

const EditorToolbar = () => (
  <Toolbar $height={29}>
    <Group>
      <Tool $w={15} aria-label="Solo Editor">
        <Svg size={13}>
          <circle cx="8" cy="8" r="6.500" fill="#fff" />
          <path d="M10.500 5.500C8 4 5.500 5 5.800 6.500S10.500 8 10.200 9.700 7 11.500 5.300 10.300" stroke="#33363a" strokeWidth="1.600" />
        </Svg>
      </Tool>
    </Group>
    <Spacer $w={190} />
    <Group>
      <Tool aria-label="Audition">
        <Svg size={12}><path d="M3 2l11 6-11 6z" fill="currentColor" stroke="none" /></Svg>
      </Tool>
      <Tool $w={16} aria-label="Audition loop"><CycleIcon /></Tool>
    </Group>
    <LeftTick />
    <Group $dark>
      <Tool $on aria-label="Auto-Scroll"><ScrollIcon size={13} /></Tool>
      <Tool $w={16} $dark aria-label="Auto-Scroll settings"><Caret /></Tool>
    </Group>
    <Group>
      <Tool $w={15} aria-label="Acoustic feedback"><MonitorIcon size={13} /></Tool>
    </Group>
    <Group>
      {editorTools.map(([name, icon]) => (
        <Tool key={name} aria-label={name}>{icon}</Tool>
      ))}
    </Group>
    <Group>
      <Tool $w={16} aria-label="Snap to Zero Crossing"><FadeIcon /></Tool>
      <Tool $w={17} $on aria-label="Snap"><SnapIcon size={13} /></Tool>
    </Group>
    <Group $dark>
      <Tool $w={16} $grey aria-label="Musical Mode"><NoteIcon size={13} /></Tool>
      <Stepper $w={63}><input aria-label="Bars" defaultValue="125 Bars" /><Arrows /></Stepper>
      <Stepper $w={63}><input aria-label="Beats" defaultValue="0 Beats" /><Arrows /></Stepper>
      <Stepper $w={54}><input aria-label="Tempo" defaultValue="120.97" /><Arrows /></Stepper>
      <Stepper $w={36} $plain><input aria-label="Time signature" defaultValue="4/4" /></Stepper>
      <Select $w={107} $line label="Algorithm" value="élastique Pro - Time" />
    </Group>
    <Group $dark>
      <Tool $on aria-label="Regions"><MarksIcon size={12} /></Tool>
      <Tool $on aria-label="Lanes"><LayersIcon size={12} /></Tool>
      <Tool $w={17} $on aria-label="Clips"><StackIcon size={12} /></Tool>
      <Select $w={88} label="Clip" value="Skeleton_Twins_." />
    </Group>
    <Group $dark>
      <Tool $w={16} aria-label="Colors"><HeadIcon size={13} /></Tool>
    </Group>
  </Toolbar>
);

const InfoLine = styled.dl`
  display: flex;
  height: 30px;
  margin: 0;
  padding: 3px 0 2px;
  background: #000;
`;

const InfoCell = styled.div`
  flex: ${(p) => p.$span} 0 0;
  min-width: 0;
  border-right: ${(p) => (p.$last ? "0" : "1px solid #8f9193")};
  text-align: center;
  white-space: nowrap;
  dt {
    font-size: 8px;
    color: #b3b5b7;
    line-height: 11px;
  }
  dd {
    display: flex;
    justify-content: ${(p) => (p.$split ? "space-between" : "center")};
    margin: 2px 6px 0;
    font-size: 7px;
    font-weight: 600;
    line-height: 11px;
    color: #c9cacb;
  }
`;

const infoCells = [
  ["Sample Rate", ["48.000", "kHz"], 86],
  ["Bit Depth", ["24", "bit"], 70],
  ["Length", ["111. 0. 0.  0"], 71],
  ["Global Transpose", ["Follow"], 101],
  ["Processing", ["None"], 86],
  ["Domain", ["Bars+Beats"], 87],
  ["Offline Edits", ["0"], 100],
  ["Zoom", ["282.5540"], 71],
  ["Selection", ["-"], 141],
  ["Current Pitch", ["-"], 71],
  ["Original Pitch", ["-"], 70],
];

const EditorGrid = styled.div`
  display: grid;
  grid-template-columns: 21px 1fr;
  grid-template-rows: 18px 89px 90px;
  background: #676767;
`;

const DbHead = styled.div`
  display: flex;
  align-items: center;
  gap: 3px;
  padding-left: 3px;
  background: #1c2733;
  color: #b9bcbf;
  font-size: 7px;
  font-weight: 600;
`;

const DbScale = styled.div`
  display: flex;
  flex-direction: column;
  justify-content: space-between;
  padding: 1px 3px 0 0;
  border-bottom: 1px solid #77797b;
  background: #1a1d21;
  color: #c2c4c6;
  font-size: 7px;
  line-height: 10px;
  text-align: right;
  white-space: nowrap;
`;

const MeasureRuler = styled.div`
  position: relative;
  background: #8b8c8f;
  svg {
    position: absolute;
    inset: 0;
    width: 100%;
    height: 100%;
  }
`;

const Measures = styled.div`
  position: relative;
  display: flex;
  height: 100%;
`;

const Measure = styled.span`
  flex: ${(p) => p.$span} 0 0;
  min-width: 0;
  padding-top: 6px;
  color: #161616;
  font-size: 8px;
  font-weight: 600;
  text-indent: 4px;
`;

const WaveLane = styled.div`
  border-top: ${(p) => (p.$second ? "1px solid #1f1f1f" : "0")};
  background: linear-gradient(#6b6b6b, #656565);
  overflow: hidden;
  svg {
    display: block;
    width: 100%;
    height: 100%;
  }
`;

// peak height in pixels above and below the zero line, as [x, height]
const leftTop = [
  [21, 22], [23, 30], [30, 22], [36, 21], [46, 16], [52, 10], [65, 8], [70, 10], [77, 6], [78, 20], [82, 31], [85, 26], [92, 19], [100, 15], [110, 16], [123, 19], [130, 16], [145, 12], [147, 20], [149, 37], [153, 30], [156, 23], [165, 20], [180, 17], [187, 11], [200, 11], [216, 7], [218, 19], [221, 25], [230, 20], [243, 15], [260, 20], [275, 12], [287, 16], [289, 34], [293, 33], [300, 27], [317, 27], [324, 18], [330, 11], [338, 11], [345, 8], [357, 8], [359, 31], [364, 23], [375, 16], [397, 19], [412, 13], [427, 13], [429, 27], [434, 32], [437, 20], [460, 20], [470, 13], [480, 9], [496, 6], [498, 24], [501, 28], [507, 22], [516, 15], [541, 20], [556, 12], [566, 14], [568, 26], [576, 28], [582, 31], [586, 21], [600, 20], [610, 11], [620, 7], [629, 9], [636, 6], [638, 25], [650, 25], [654, 16], [680, 18], [705, 13], [707, 33], [710, 33], [715, 22], [735, 18], [745, 11], [765, 11], [774, 6], [778, 20], [782, 25], [795, 14], [820, 19], [836, 11], [845, 15], [847, 30], [850, 37], [860, 30], [878, 26], [886, 15], [895, 12], [905, 8], [915, 8], [918, 30], [924, 24], [935, 16], [962, 20], [976, 11], [985, 14], [988, 31], [993, 31], [1000, 24],
];
const leftBottom = [
  [21, 24], [23, 29], [30, 18], [42, 19], [50, 10], [60, 7], [70, 9], [77, 8], [79, 20], [90, 20], [105, 12], [115, 15], [123, 20], [146, 19], [148, 28], [150, 35], [155, 23], [172, 20], [180, 12], [190, 9], [217, 8], [219, 20], [230, 18], [245, 12], [265, 19], [286, 17], [289, 36], [300, 29], [315, 29], [322, 20], [330, 12], [345, 8], [357, 7], [359, 20], [375, 16], [385, 12], [397, 16], [410, 20], [427, 19], [429, 36], [440, 27], [455, 23], [465, 18], [475, 9], [497, 7], [499, 20], [520, 12], [541, 19], [565, 17], [568, 34], [583, 29], [600, 21], [615, 10], [622, 7], [636, 8], [638, 20], [655, 14], [680, 19], [705, 18], [708, 34], [720, 22], [735, 18], [745, 11], [774, 7], [778, 19], [810, 13], [830, 19], [845, 19], [847, 37], [858, 31], [876, 27], [886, 13], [895, 8], [915, 8], [918, 20], [940, 14], [962, 19], [985, 19], [988, 35], [1000, 28],
];
const rightTop = [
  [21, 32], [27, 28], [35, 24], [50, 18], [58, 11], [75, 9], [78, 22], [90, 18], [110, 15], [130, 17], [146, 12], [148, 28], [150, 27], [162, 22], [172, 21], [180, 17], [192, 10], [215, 6], [218, 18], [230, 18], [240, 12], [250, 18], [262, 17], [286, 12], [288, 29], [300, 29], [310, 33], [320, 26], [327, 19], [335, 14], [356, 9], [359, 21], [375, 15], [395, 17], [425, 10], [428, 28], [431, 31], [440, 25], [465, 21], [480, 13], [496, 8], [498, 20], [515, 14], [540, 17], [565, 11], [567, 31], [580, 29], [592, 24], [608, 18], [615, 12], [635, 9], [637, 21], [650, 16], [670, 17], [704, 12], [707, 28], [709, 32], [718, 23], [740, 18], [755, 9], [775, 6], [778, 20], [790, 16], [815, 17], [842, 11], [847, 30], [860, 28], [868, 32], [878, 25], [888, 16], [905, 10], [915, 9], [918, 21], [935, 15], [955, 16], [984, 11], [987, 27], [993, 31], [1000, 28],
];
const rightBottom = [
  [21, 27], [25, 25], [40, 20], [50, 14], [60, 9], [76, 6], [79, 20], [90, 18], [110, 14], [146, 13], [148, 29], [152, 22], [172, 20], [185, 12], [195, 8], [216, 6], [218, 17], [233, 18], [245, 13], [285, 13], [288, 28], [300, 24], [315, 28], [328, 19], [340, 10], [356, 8], [359, 17], [380, 14], [425, 13], [428, 29], [440, 28], [460, 23], [478, 13], [496, 8], [499, 17], [515, 15], [530, 12], [565, 13], [567, 29], [582, 26], [600, 18], [615, 9], [635, 6], [638, 20], [655, 14], [704, 13], [707, 29], [715, 21], [740, 17], [752, 8], [775, 6], [777, 17], [795, 16], [842, 12], [847, 34], [858, 27], [876, 26], [890, 14], [905, 9], [915, 8], [918, 17], [940, 13], [984, 12], [987, 28], [1000, 27],
];

function peakAt(points, x) {
  let i = 1;
  while (i < points.length - 1 && points[i][0] < x) i++;
  const [x0, y0] = points[i - 1];
  const [x1, y1] = points[i];
  return y0 + ((y1 - y0) * (x - x0)) / (x1 - x0);
}

function noise(n) {
  const v = Math.sin(n * 127.1 + 311.7) * 43758.5453;
  return v - Math.floor(v);
}

// loud passages get deeper notches and taller spikes than the quiet ones
function outline(top, bottom, zero, seed, spike) {
  const up = [];
  const down = [];
  const jag = (peak, r) => {
    const loud = Math.min(1, peak / 26);
    return spike ? peak * (1 + Math.pow(r, 7) * 0.35 * loud) : peak * (1 - Math.pow(r, 4) * 0.4 * loud) + 1;
  };
  for (let x = 21; x <= 1000; x++) {
    const a = noise(x + seed);
    const b = noise(x * 3 + seed + 7);
    up.push(`${x - 21} ${(zero - jag(peakAt(top, x), a)).toFixed(1)}`);
    down.unshift(`${x - 21} ${(zero + jag(peakAt(bottom, x), b)).toFixed(1)}`);
  }
  return `M${up.join("L")}L${down.join("L")}Z`;
}

const Wave = ({ top, bottom, seed }) => (
  <svg viewBox="0 0 979 89" preserveAspectRatio="none" aria-hidden="true">
    <path d={outline(top, bottom, 45, seed + 50, true)} fill="#3a7596" />
    <path d={outline(top, bottom, 45, seed, false)} fill="#87e965" />
  </svg>
);

const ticks = [];
for (let i = -3; i < 54; i++) {
  const x = Math.round(56 + i * 17.47) + 0.5;
  const h = i % 16 === 0 ? 17 : 6;
  ticks.push(<path key={i} d={`M${x} 0v${h}`} stroke={i % 4 === 0 ? "#222" : "#66676a"} />);
}

const DbLabels = () => (
  <DbScale>
    <span>-18.0</span>
    <span>-24</span>
    <span>-oo</span>
    <span>-24</span>
    <span>-18.0</span>
  </DbScale>
);

const EditorScroll = styled.div`
  height: 15px;
  padding: 3px 0 0 32px;
  border-top: 1px solid #4b4d50;
  background: #25292c;
  div {
    height: 3px;
    padding-left: calc(53% + 4px);
    background: linear-gradient(transparent 1px, #8b8d8f 1px 2px, transparent 2px);
  }
  i {
    display: block;
    width: 44px;
    height: 3px;
    border-radius: 2px;
    background: #c2bfbf;
  }
`;

const Tabs = styled.div`
  display: flex;
  align-items: flex-start;
  height: 18px;
  background: linear-gradient(#5a5d60 1px, #070708 1px);
`;

const TabRow = styled.div`
  display: flex;
  gap: 1px;
`;

const Tab = styled.button`
  height: 15px;
  padding: 0 14px;
  font-size: 8px;
  font-weight: 700;
  ${(p) =>
    p.$active &&
    css`
      border: 1px solid #6a6d70;
      border-top-color: #25292c;
      border-radius: 0 0 3px 3px;
      background: #25292c;
      color: #fff;
    `}
`;

const TabRest = styled.div`
  padding: 4px 0 0 4px;
`;

const CloseButton = styled.button`
  width: 8px;
  height: 15px;
  overflow: hidden;
  text-align: left;
`;

const BottomEdge = styled.div`
  height: 2px;
  background: #150d10;
`;

const SampleEditor = () => (
  <section>
    <EditorToolbar />
    <InfoLine>
      {infoCells.map(([name, values, span]) => (
        <InfoCell key={name} $span={span} $split={values.length > 1}>
          <dt>{name}</dt>
          <dd>{values.map((v) => <span key={v}>{v}</span>)}</dd>
        </InfoCell>
      ))}
      <InfoCell $span={46} $last />
    </InfoLine>
    <EditorGrid>
      <DbHead>
        db
        <svg width="4" height="3" viewBox="0 0 8 5" fill="currentColor"><path d="M0 0h8L4 5z" /></svg>
      </DbHead>
      <MeasureRuler>
        <svg viewBox="0 0 979 18" preserveAspectRatio="none">{ticks}</svg>
        <Measures>
          <Measure $span={56} />
          <Measure $span={279}>50</Measure>
          <Measure $span={280}>51</Measure>
          <Measure $span={279}>52</Measure>
          <Measure $span={85}>53</Measure>
        </Measures>
      </MeasureRuler>
      <DbLabels />
      <WaveLane><Wave top={leftTop} bottom={leftBottom} seed={3} /></WaveLane>
      <DbLabels />
      <WaveLane $second><Wave top={rightTop} bottom={rightBottom} seed={900} /></WaveLane>
    </EditorGrid>
    <EditorScroll><div><i /></div></EditorScroll>
    <Tabs>
      <CloseButton aria-label="Close lower zone">
        <svg width="4" height="6" viewBox="0 0 4 6" fill="none" stroke="#eee"><path d="M3.500 0L1 3l2.500 3M0 1.500L1 3 0 4.500" /></svg>
      </CloseButton>
      <TabRow>
        <Tab>MixConsole</Tab>
        <Tab $active>Editor</Tab>
        <Tab>Sampler Control</Tab>
        <Tab>Chord Pads</Tab>
        <TabRest><FaCog size={9} /></TabRest>
      </TabRow>
    </Tabs>
    <Toolbar $indent={3}>
      <Dots />
      <Group>
        <Tool $w={26} $size={9}>AQ</Tool>
      </Group>
      <Spacer $w={50} />
      <Time icon={<LeftMark size={11} />} label="Left locator" value="0:00:01.801" />
      <Time icon={<RightMark size={11} />} label="Right locator" value="0:04:10.834" />
      <Group>
        <Tool $w={16} $on $size={10} aria-label="Lock punch points"><FaLock /></Tool>
      </Group>
      <Time icon={<PunchIn />} label="Punch in" value="0:00:01.801" dim />
      <Time icon={<PunchOut />} label="Punch out" value="0:04:10.834" dim />
      <Dots />
      <Transport />
      <Dots />
      <Group>
        <Tool $w={26} aria-label="Click">
          <Svg size={12} stroke="#85888b"><circle cx="6" cy="8" r="2.500" fill="#85888b" /><path d="M8 2c5 1 5 11 0 12" /></Svg>
        </Tool>
      </Group>
      <Time icon={<ClockIcon />} label="Primary time" value="0:00:00.000" />
      <Time icon={<ClockIcon />} label="Secondary time" value="0:00:00.000" />
      <Dots />
      <Group>
        <Tool $w={17} $on aria-label="Tempo track">
          <Svg size={12}>
            <path d="M6 1v11M12 2v12M10 5h4M10 11h4" strokeWidth="1.700" />
            <ellipse cx="4" cy="12.500" rx="2.800" ry="2.200" fill="currentColor" stroke="none" />
          </Svg>
        </Tool>
        <Tool $w={40} $dark aria-label="Tempo mode" />
      </Group>
    </Toolbar>
    <BottomEdge />
  </section>
);

function App() {
  return (
    <>
      <GlobalStyle />
      <Page>
        <MenuBar>
          {menus.map((m) => (
            <a key={m} href="#">{m}</a>
          ))}
          <WindowTitle>Cubase Pro Project - Skeleton_Twins_Final</WindowTitle>
        </MenuBar>
        <ProjectToolbar />
        <InfoStrip>No Object Selected</InfoStrip>
        <Divider />
        <Workspace>
          <Tracks />
          <Arrangement />
        </Workspace>
        <Divider $thick />
        <SampleEditor />
        <ReverbWindow />
      </Page>
    </>
  );
}

export default App;
